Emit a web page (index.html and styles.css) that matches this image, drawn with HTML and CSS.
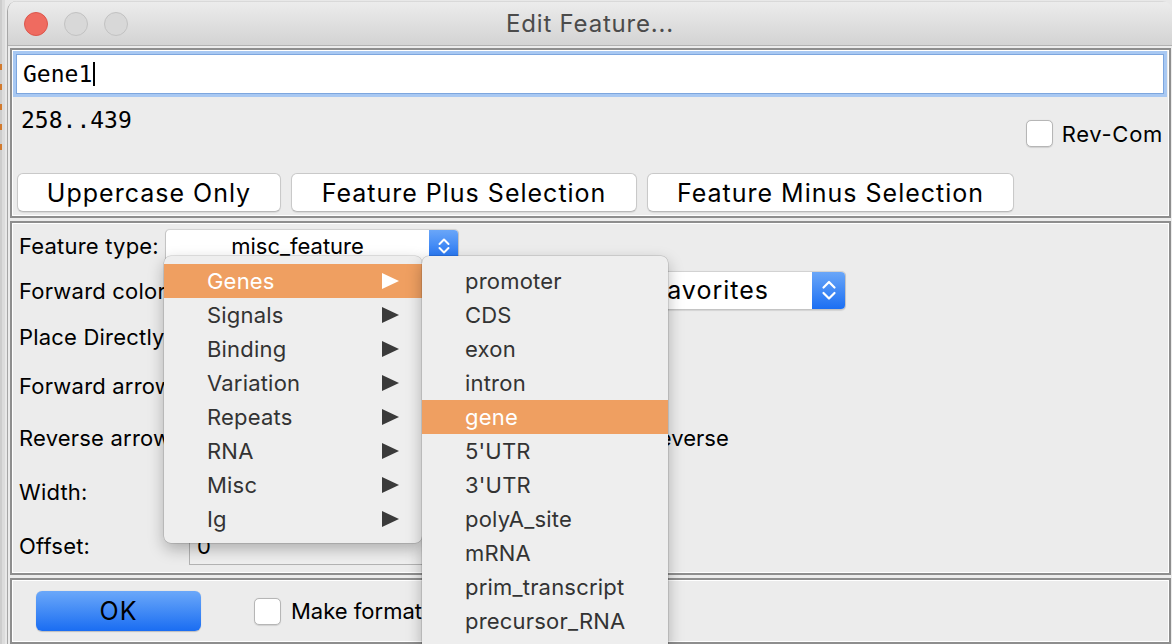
FILE: index.html
```html
<!DOCTYPE html>
<html lang="en">
<head>
<meta charset="utf-8">
<title>Edit Feature...</title>
<link rel="stylesheet" href="styles.css">
</head>
<body>
<div class="window">
  <header class="titlebar">
    <div class="lights">
      <span class="light red"></span>
      <span class="light"></span>
      <span class="light"></span>
    </div>
    <div class="title">Edit Feature...</div>
    <div></div>
  </header>
  <main class="content">
    <section class="panel p1">
      <div class="name-ring">
        <div class="name-field"><span>Gene1</span><span class="caret"></span></div>
      </div>
      <div class="info-row">
        <span class="range">258..439</span>
        <label class="revcom"><span class="checkbox"></span><span>Rev-Com</span></label>
      </div>
      <div class="btn-row">
        <button class="btn w-upper">Uppercase Only</button>
        <button class="btn w-plus">Feature Plus Selection</button>
        <button class="btn w-minus">Feature Minus Selection</button>
      </div>
    </section>

    <section class="panel p2">
      <div class="row">
        <span class="lbl">Feature type:</span>
        <div class="combo type-combo">
          <span class="combo-text">misc_feature</span>
          <span class="combo-arrow"><svg width="14" height="20" viewBox="0 0 14 20"><path d="M2.5 8 L7 3.5 L11.5 8 M2.5 12 L7 16.5 L11.5 12" fill="none" stroke="#fff" stroke-width="2" stroke-linecap="round" stroke-linejoin="round"/></svg></span>
        </div>
      </div>
      <div class="row">
        <span class="lbl">Forward color:</span>
        <div class="combo fav-combo">
          <span class="combo-text">Favorites</span>
          <span class="combo-arrow"><svg width="16" height="26" viewBox="0 0 16 26"><path d="M2.5 10.5 L8 5 L13.5 10.5 M2.5 16 L8 21.5 L13.5 16" fill="none" stroke="#fff" stroke-width="2.2" stroke-linecap="round" stroke-linejoin="round"/></svg></span>
        </div>
      </div>
      <div class="row">
        <span class="lbl">Place Directly on Sequence</span>
      </div>
      <div class="row">
        <span class="lbl">Forward arrow:</span>
      </div>
      <div class="row">
        <span class="lbl">Reverse arrow:</span>
        <label class="rev-check"><span class="checkbox"></span><span>Reverse</span></label>
      </div>
      <div class="row">
        <span class="lbl">Width:</span>
        <div class="field">3</div>
      </div>
      <div class="row">
        <span class="lbl">Offset:</span>
        <div class="field">0</div>
      </div>
    </section>

    <section class="panel p3">
      <button class="ok">OK</button>
      <label class="make"><span class="checkbox"></span><span>Make format default for this type</span></label>
    </section>
  </main>
</div>

<div class="menu m1">
  <div class="item on"><span>Genes</span><span class="tri"></span></div>
  <div class="item"><span>Signals</span><span class="tri"></span></div>
  <div class="item"><span>Binding</span><span class="tri"></span></div>
  <div class="item"><span>Variation</span><span class="tri"></span></div>
  <div class="item"><span>Repeats</span><span class="tri"></span></div>
  <div class="item"><span>RNA</span><span class="tri"></span></div>
  <div class="item"><span>Misc</span><span class="tri"></span></div>
  <div class="item"><span>Ig</span><span class="tri"></span></div>
</div>

<div class="menu m2">
  <div class="item"><span>promoter</span></div>
  <div class="item"><span>CDS</span></div>
  <div class="item"><span>exon</span></div>
  <div class="item"><span>intron</span></div>
  <div class="item on"><span>gene</span></div>
  <div class="item"><span>5'UTR</span></div>
  <div class="item"><span>3'UTR</span></div>
  <div class="item"><span>polyA_site</span></div>
  <div class="item"><span>mRNA</span></div>
  <div class="item"><span>prim_transcript</span></div>
  <div class="item"><span>precursor_RNA</span></div>
</div>
</body>
</html>
```

FILE: styles.css
```css
* { box-sizing: border-box; }

html, body { margin: 0; padding: 0; }

body {
  width: 1172px;
  height: 644px;
  overflow: hidden;
  position: relative;
  font-family: Inter, "Liberation Sans", sans-serif;
  color: #000;
  background-color: #e2e2e2;
  background-image:
    repeating-linear-gradient(to bottom, transparent 0 14px, #d27a2e 14px 20px),
    linear-gradient(to right, #cdcdcd 0 2px, #dcdcdc 2px 5px, #e8e8e8 5px 7px);
  background-size: 2px 110px, 100% 100%;
  background-position: 0 50px, 0 0;
  background-repeat: no-repeat, no-repeat;
}

.window {
  margin: 1px 0 0 7px;
  width: 1165px;
  height: 643px;
  background: #ececec;
  border-left: 1px solid #a6a6a6;
  border-radius: 10px 10px 0 0;
  overflow: hidden;
}

/* title bar */
.titlebar {
  height: 45px;
  display: grid;
  grid-template-columns: 1fr auto 1fr;
  align-items: center;
  background: linear-gradient(#ececec, #d3d3d3);
  border-top: 1px solid #d9d9d9;
  border-bottom: 1px solid #b2b2b2;
}

.lights {
  display: flex;
  gap: 16px;
  padding-left: 16px;
  padding-top: 1px;
}

.light {
  width: 24px;
  height: 24px;
  border-radius: 50%;
  background: #d8d8d8;
  border: 1px solid #c2c2c2;
}

.light.red {
  background: #ef6b60;
  border-color: #dc564c;
}

.title {
  font-size: 24px;
  color: #4b4b4b;
  letter-spacing: 0.8px;
}

/* panels */
.content {
  padding: 2px 1px 0 2px;
  display: flex;
  flex-direction: column;
  gap: 3px;
}

.panel {
  border: 2px solid #8e8e8e;
  box-shadow: inset 0 0 0 1px #ffffff;
  padding: 1px;
}

.p1 { height: 170px; }
.p2 {
  height: 354px;
  display: grid;
  grid-template-rows: 44px 46px 46px 51px 54px 54px 53px;
}
.p3 {
  height: 66px;
  display: flex;
  align-items: center;
  padding-left: 24px;
}

/* panel 1 */
.name-ring {
  background: #a8c8f2;
  padding: 3px;
  margin-right: 1px;
}

.name-field {
  height: 40px;
  background: #fff;
  border: 1px solid #7da6de;
  display: flex;
  align-items: center;
  padding-left: 6px;
  font: 23px "DejaVu Sans Mono", monospace;
  color: #000;
}

.caret {
  width: 1.5px;
  height: 24px;
  background: #000;
  margin-left: 1px;
}

.info-row {
  height: 76px;
  display: flex;
  justify-content: space-between;
  align-items: flex-start;
  padding: 10px 5px 0 8px;
}

.range {
  font: 23px/27px "DejaVu Sans Mono", monospace;
}

.revcom {
  display: flex;
  align-items: center;
  gap: 9px;
  margin-top: 13px;
  font-size: 22px;
  letter-spacing: 0.7px;
}

.checkbox {
  width: 27px;
  height: 27px;
  flex: none;
  background: #fff;
  border: 1px solid #b6b6b6;
  border-radius: 5px;
  box-shadow: 0 0.5px 1px rgba(0, 0, 0, 0.12);
}

.btn-row {
  display: flex;
  gap: 10px;
  padding-left: 4px;
}

.btn {
  height: 39px;
  padding: 0;
  background: #fff;
  border: 1px solid #c9c9c9;
  border-bottom-color: #b9b9b9;
  border-radius: 6px;
  box-shadow: 0 1px 1px rgba(0, 0, 0, 0.08);
  font: 25px Inter, "Liberation Sans", sans-serif;
  color: #000;
  letter-spacing: 1px;
}

.w-upper { width: 264px; }
.w-plus { width: 346px; }
.w-minus { width: 367px; }

/* panel 2 */
.row {
  display: flex;
  align-items: center;
  padding-left: 6px;
  font-size: 22px;
  min-width: 0;
}

.lbl {
  width: 146px;
  flex: none;
  white-space: nowrap;
  letter-spacing: 0.2px;
}

.combo {
  display: flex;
  background: #fff;
  border: 1px solid #c4c4c4;
  border-top-color: #d2d2d2;
  border-radius: 5px;
  box-shadow: 0 0.5px 1px rgba(0, 0, 0, 0.1);
  overflow: hidden;
}

.combo-text {
  flex: 1;
  display: flex;
  align-items: center;
  justify-content: center;
}

.combo-arrow {
  flex: none;
  display: flex;
  align-items: center;
  justify-content: center;
  background: linear-gradient(#6aa6f8, #1b6ff3);
}

.type-combo {
  width: 294px;
  height: 34px;
}
.type-combo .combo-arrow { width: 29px; }

.fav-combo {
  width: 238px;
  height: 39px;
  margin-left: 443px;
  margin-top: -2px;
  font-size: 25px;
  letter-spacing: 1px;
}
.fav-combo .combo-arrow { width: 33px; }

.rev-check {
  display: flex;
  align-items: center;
  gap: 9px;
  margin-left: 444px;
}

.field {
  width: 460px;
  height: 39px;
  margin-left: 24px;
  border: 1px solid #b3b3b3;
  background: #efefef;
  display: flex;
  align-items: center;
  padding-left: 7px;
}

/* panel 3 */
.ok {
  width: 165px;
  height: 40px;
  padding: 0;
  border: none;
  border-radius: 6px;
  background: linear-gradient(#6ba8f9, #1a6df2);
  box-shadow: 0 0.5px 1px rgba(0, 0, 0, 0.2);
  font: 25px Inter, "Liberation Sans", sans-serif;
  letter-spacing: 1px;
  color: #000;
}

.make {
  display: flex;
  align-items: center;
  gap: 10px;
  margin-left: 53px;
  font-size: 22px;
  white-space: nowrap;
}

/* popup menus */
.menu {
  position: absolute;
  top: 256px;
  background: #eeeeee;
  border-radius: 7px;
  box-shadow: 0 0 0 0.5px rgba(0, 0, 0, 0.2), 0 6px 16px rgba(0, 0, 0, 0.28);
  padding: 8px 0 7px;
  font-size: 22px;
  color: #333;
}

.m1 { left: 164px; width: 258px; }
.m2 { left: 422px; width: 246px; padding-bottom: 12px; }

.item {
  height: 34px;
  display: flex;
  align-items: center;
  justify-content: space-between;
  padding: 0 23px 0 43px;
  letter-spacing: 0.2px;
}

.item.on {
  background: #ef9f61;
  color: #fff;
}

.tri {
  width: 0;
  height: 0;
  border-left: 17px solid #3a3a3a;
  border-top: 8px solid transparent;
  border-bottom: 8px solid transparent;
}

.item.on .tri { border-left-color: #fff; }
```
